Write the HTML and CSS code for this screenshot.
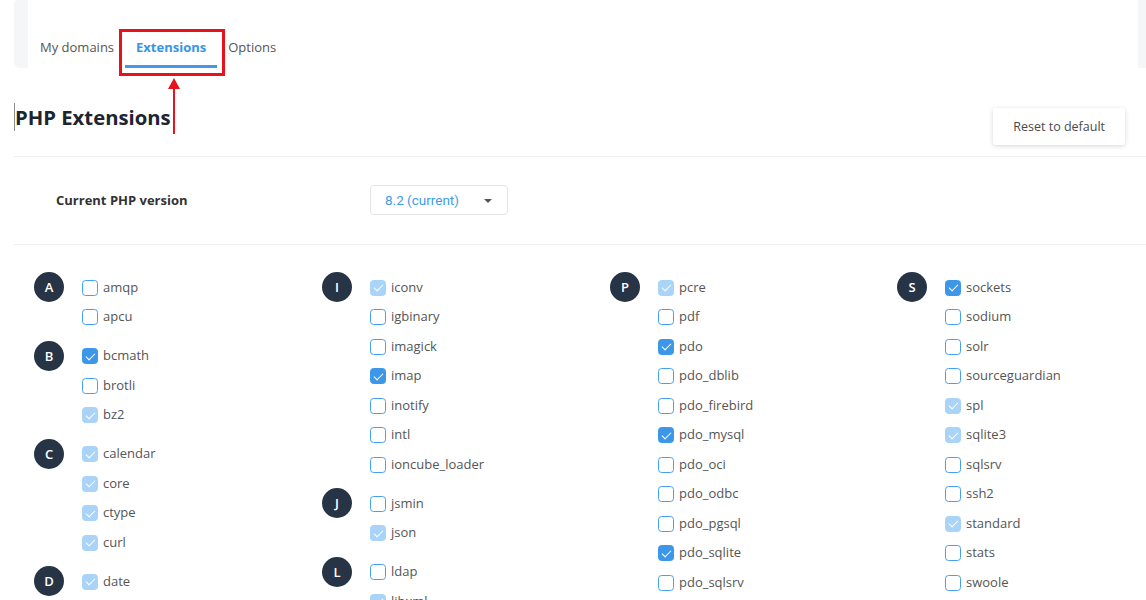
FILE: index.html
```html
<!DOCTYPE html>
<html lang="en">
<head>
<meta charset="utf-8">
<title>PHP Extensions</title>
<link rel="stylesheet" href="styles.css">
</head>
<body>
<div class="page">
  <div class="topbar">
    <nav class="tabs">
      <a class="tab">My domains</a>
      <a class="tab active">Extensions</a>
      <a class="tab">Options</a>
    </nav>
  </div>
  <div class="annot-box"></div>
  <div class="annot-arrow"><span class="head"></span><span class="shaft"></span></div>

  <div class="header">
    <h1 class="title">PHP Extensions</h1>
    <button class="reset">Reset to default</button>
  </div>

  <div class="version">
    <div class="v-label">Current PHP version</div>
    <div class="select"><span>8.2 (current)</span><span class="caret"></span></div>
  </div>

  <div class="grid">
    <div class="col">
      <div class="group"><div class="letter">A</div><ul class="list">
        <li><span class="cb"></span>amqp</li>
        <li><span class="cb"></span>apcu</li>
      </ul></div>
      <div class="group"><div class="letter">B</div><ul class="list">
        <li><span class="cb on"></span>bcmath</li>
        <li><span class="cb"></span>brotli</li>
        <li><span class="cb dis"></span>bz2</li>
      </ul></div>
      <div class="group"><div class="letter">C</div><ul class="list">
        <li><span class="cb dis"></span>calendar</li>
        <li><span class="cb dis"></span>core</li>
        <li><span class="cb dis"></span>ctype</li>
        <li><span class="cb dis"></span>curl</li>
      </ul></div>
      <div class="group"><div class="letter">D</div><ul class="list">
        <li><span class="cb dis"></span>date</li>
      </ul></div>
    </div>

    <div class="col">
      <div class="group"><div class="letter">I</div><ul class="list">
        <li><span class="cb dis"></span>iconv</li>
        <li><span class="cb"></span>igbinary</li>
        <li><span class="cb"></span>imagick</li>
        <li><span class="cb on"></span>imap</li>
        <li><span class="cb"></span>inotify</li>
        <li><span class="cb"></span>intl</li>
        <li><span class="cb"></span>ioncube_loader</li>
      </ul></div>
      <div class="group"><div class="letter">J</div><ul class="list">
        <li><span class="cb"></span>jsmin</li>
        <li><span class="cb dis"></span>json</li>
      </ul></div>
      <div class="group"><div class="letter">L</div><ul class="list">
        <li><span class="cb"></span>ldap</li>
        <li><span class="cb dis"></span>libxml</li>
      </ul></div>
    </div>

    <div class="col">
      <div class="group"><div class="letter">P</div><ul class="list">
        <li><span class="cb dis"></span>pcre</li>
        <li><span class="cb"></span>pdf</li>
        <li><span class="cb on"></span>pdo</li>
        <li><span class="cb"></span>pdo_dblib</li>
        <li><span class="cb"></span>pdo_firebird</li>
        <li><span class="cb on"></span>pdo_mysql</li>
        <li><span class="cb"></span>pdo_oci</li>
        <li><span class="cb"></span>pdo_odbc</li>
        <li><span class="cb"></span>pdo_pgsql</li>
        <li><span class="cb on"></span>pdo_sqlite</li>
        <li><span class="cb"></span>pdo_sqlsrv</li>
      </ul></div>
    </div>

    <div class="col">
      <div class="group"><div class="letter">S</div><ul class="list">
        <li><span class="cb on"></span>sockets</li>
        <li><span class="cb"></span>sodium</li>
        <li><span class="cb"></span>solr</li>
        <li><span class="cb"></span>sourceguardian</li>
        <li><span class="cb dis"></span>spl</li>
        <li><span class="cb dis"></span>sqlite3</li>
        <li><span class="cb"></span>sqlsrv</li>
        <li><span class="cb"></span>ssh2</li>
        <li><span class="cb dis"></span>standard</li>
        <li><span class="cb"></span>stats</li>
        <li><span class="cb"></span>swoole</li>
      </ul></div>
    </div>
  </div>
</div>
</body>
</html>
```

FILE: styles.css
```css
* { box-sizing: border-box; }
html, body { margin: 0; padding: 0; background: #fff; overflow-x: hidden; }
body {
  font-family: "Open Sans", "Liberation Sans", sans-serif;
  color: #555;
  font-size: 13px;
}
.page { position: relative; padding-left: 14px; }

.topbar {
  background: #f5f6f8;
  height: 68px;
  padding: 0 8px 0 14px;
  border-radius: 4px 0 0 6px;
}
.tabs {
  background: #fff;
  height: 68px;
  display: flex;
  padding: 36px 0 0 1px;
}
.tab {
  display: block;
  padding: 0 11px 7px;
  line-height: 22px;
  height: 32px;
  font-size: 13px;
  color: #555;
  border-bottom: 3px solid transparent;
  cursor: pointer;
}
.tab.active {
  color: #3595e6;
  font-weight: 700;
  border-bottom-color: #3d9be9;
}

.annot-box {
  position: absolute;
  left: 119px;
  top: 29px;
  width: 106px;
  height: 47px;
  border: 3px solid #e8121a;
}
.annot-arrow {
  position: absolute;
  left: 167px;
  top: 78px;
  width: 13px;
  height: 56px;
  display: flex;
  flex-direction: column;
  align-items: center;
}
.annot-arrow .head {
  width: 0;
  height: 0;
  border-left: 6px solid transparent;
  border-right: 6px solid transparent;
  border-bottom: 11px solid #e8121a;
}
.annot-arrow .shaft {
  width: 2px;
  flex: 1;
  background: #e8121a;
}

.header {
  display: flex;
  justify-content: space-between;
  align-items: flex-start;
  padding: 35px 21px 11px 0;
  border-bottom: 1px solid #eef0f3;
}
.title {
  margin: 0;
  font-size: 20.3px;
  line-height: 28px;
  font-weight: 700;
  color: #1c2530;
  border-left: 1px solid #8a8a8a;
}
.reset {
  margin-top: 5px;
  height: 37px;
  padding: 0 20px;
  border: none;
  border-radius: 3px;
  background: #fff;
  box-shadow: 0 1px 5px rgba(0, 0, 0, 0.16);
  font-family: "Open Sans", "Liberation Sans", sans-serif;
  font-size: 12.5px;
  color: #4a4a4a;
}

.version {
  display: flex;
  align-items: center;
  height: 88px;
  padding: 0 0 1px 42px;
  border-bottom: 1px solid #eef0f3;
}
.v-label {
  width: 314px;
  font-weight: 700;
  color: #333;
  font-size: 13px;
}
.select {
  width: 138px;
  height: 30px;
  border: 1px solid #e2e6ea;
  border-radius: 4px;
  display: flex;
  align-items: center;
  justify-content: space-between;
  padding: 0 15px 0 14px;
  font-family: Roboto, "Liberation Sans", sans-serif;
  font-size: 13.5px;
  color: #3d9be9;
}
.caret {
  width: 0;
  height: 0;
  border-left: 4px solid transparent;
  border-right: 4px solid transparent;
  border-top: 4px solid #555;
  margin-top: 2px;
}

.grid {
  display: grid;
  grid-template-columns: 288px 288px 287px 1fr;
  padding: 27px 0 0 20px;
}
.group {
  display: flex;
  gap: 18px;
  margin-bottom: 9.5px;
}
.letter {
  flex: none;
  width: 30px;
  height: 30px;
  border-radius: 50%;
  background: #263445;
  color: #fff;
  font-size: 13px;
  font-weight: 600;
  display: flex;
  align-items: center;
  justify-content: center;
}
.list {
  list-style: none;
  margin: 0;
  padding: 0;
}
.list li {
  height: 29.5px;
  display: flex;
  align-items: center;
  gap: 5px;
  font-size: 13px;
  color: #555;
}
.cb {
  position: relative;
  flex: none;
  width: 16px;
  height: 16px;
  border: 1.5px solid #45a1ee;
  border-radius: 3.5px;
  background: #fff;
  margin-top: 2px;
}
.cb.on { background: #3d97e9; border-color: #3d97e9; }
.cb.dis { background: #a9d4f7; border-color: #a9d4f7; }
.cb.on::after, .cb.dis::after {
  content: "";
  position: absolute;
  left: 4.5px;
  top: 1.5px;
  width: 4px;
  height: 8px;
  border-right: 1.5px solid #fff;
  border-bottom: 1.5px solid #fff;
  transform: rotate(45deg);
}
```
